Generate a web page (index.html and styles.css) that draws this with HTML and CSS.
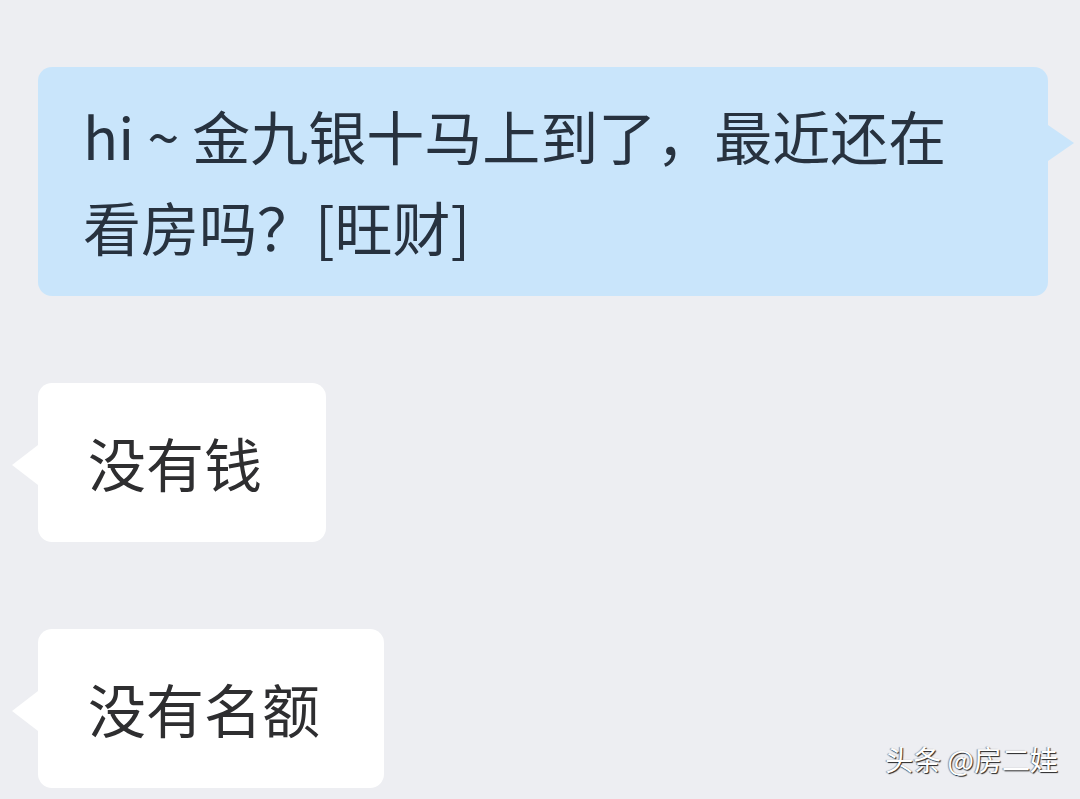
FILE: index.html
```html
<!DOCTYPE html>
<html lang="zh-CN">
<head>
    <meta charset="UTF-8">
    <meta name="viewport" content="width=device-width, initial-scale=1.0">
    <title>聊天记录</title>
    <link rel="stylesheet" href="styles.css">
</head>
<body>
    <div class="chat">
        <div class="row row-right">
            <div class="bubble bubble-blue">hi ~ 金九银十马上到了，最近还在<br>看房吗？[旺财]</div>
        </div>
        <div class="row row-left">
            <div class="bubble bubble-white">没有钱</div>
        </div>
        <div class="row row-left">
            <div class="bubble bubble-white">没有名额</div>
        </div>
    </div>
    <div class="watermark">头条 @房二娃</div>
</body>
</html>
```

FILE: styles.css
```css
html, body {
    margin: 0;
    height: 100%;
}

body {
    background: #edeef2;
    font-family: "Noto Sans CJK SC", "Noto Sans", sans-serif;
    overflow: hidden;
    position: relative;
}

.chat {
    display: flex;
    flex-direction: column;
    gap: 87px;
    padding: 67px 32px 0 38px;
}

.row {
    display: flex;
}

.bubble {
    position: relative;
    font-size: 58px;
    line-height: 91px;
    border-radius: 14px;
}

.bubble-blue {
    flex: 1;
    background: #c9e5fb;
    color: #27323f;
    padding: 23px 40px 24px 45px;
}

.bubble-blue::after {
    content: "";
    position: absolute;
    right: -26px;
    top: 58px;
    border-left: 26px solid #c9e5fb;
    border-top: 18px solid transparent;
    border-bottom: 18px solid transparent;
}

.bubble-white {
    background: #ffffff;
    color: #2e2e30;
    padding: 34px 64px 34px 50px;
}

.bubble-white::before {
    content: "";
    position: absolute;
    left: -26px;
    top: 62px;
    border-right: 26px solid #ffffff;
    border-top: 20px solid transparent;
    border-bottom: 20px solid transparent;
}

.watermark {
    position: absolute;
    right: 22px;
    bottom: 20px;
    font-size: 28px;
    color: #ffffff;
    text-shadow: 1px 1px 1px rgba(0, 0, 0, 0.85), -1px 0 1px rgba(0, 0, 0, 0.4);
}
```
